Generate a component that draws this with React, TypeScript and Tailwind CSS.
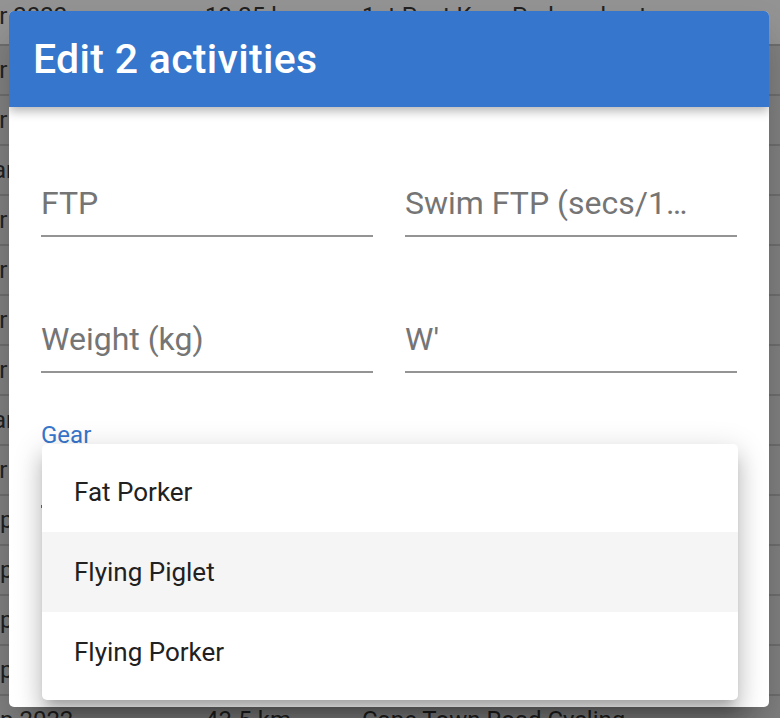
import React from "react";

interface Row {
  date: string;
  shift: string;
  distance?: string;
  name?: string;
}

// table rows that sit behind the backdrop, only their edges show
const rows: Row[] = [
  { date: "Apr 2022", shift: "-ml-[30px]", distance: "13.25 km", name: "1st Post Kom Park and out" },
  { date: "Apr 2022", shift: "-ml-[30px]" },
  { date: "Apr 2022", shift: "-ml-[30px]" },
  { date: "Mar 2022", shift: "-ml-[28px]" },
  { date: "Apr 2022", shift: "-ml-[30px]" },
  { date: "Apr 2022", shift: "-ml-[30px]" },
  { date: "Apr 2022", shift: "-ml-[30px]" },
  { date: "Apr 2022", shift: "-ml-[30px]" },
  { date: "Mar 2022", shift: "-ml-[28px]" },
  { date: "Apr 2022", shift: "-ml-[30px]" },
  { date: "Sep 2022", shift: "-ml-[27px]" },
  { date: "Sep 2022", shift: "-ml-[27px]" },
  { date: "Sep 2022", shift: "-ml-[27px]" },
  { date: "Sep 2022", shift: "-ml-[27px]" },
  { date: "Sep 2022", shift: "-ml-[27px]", distance: "43.5 km", name: "Cape Town Road Cycling" },
];

const gear = ["Fat Porker", "Flying Piglet", "Flying Porker"];

const Field: React.FC<{ label: string }> = ({ label }) => (
  <div className="flex flex-col">
    <span className="block max-w-[292px] truncate text-[32px] leading-[38px] text-[#757575]">
      {label}
    </span>
    <div className="mt-[13px] h-[2px] bg-[#949494]" />
  </div>
);

export default function App() {
  return (
    <div className="relative h-[718px] w-[780px] overflow-hidden bg-[#dddddd] font-['Roboto','Liberation_Sans',sans-serif]">
      {/* activity list */}
      <div className="flex flex-col text-[24px] text-[#3a3a3a]">
        {rows.map((row, i) => (
          <div
            key={i}
            className={
              i === 0
                ? "flex h-[46px] items-start border-b-2 border-[#bebebe] bg-white pt-[2px] leading-[28px]"
                : "flex h-[50px] items-center border-b-2 border-[#bebebe] leading-[28px]"
            }
          >
            <div className="w-[205px] shrink-0">
              <span className={`block whitespace-nowrap ${row.shift}`}>{row.date}</span>
            </div>
            <div className="w-[157px] shrink-0 whitespace-nowrap">{row.distance}</div>
            <div className="whitespace-nowrap">{row.name}</div>
          </div>
        ))}
      </div>

      {/* backdrop */}
      <div className="absolute inset-0 flex items-center bg-black/[0.42] pl-[9px]">
        <div className="flex h-[696px] w-[760px] flex-col overflow-hidden rounded-[5px] bg-white shadow-[0_22px_30px_-14px_rgba(0,0,0,0.2),0_20px_40px_4px_rgba(0,0,0,0.12)]">
          <div className="relative z-10 flex h-[96px] shrink-0 items-center bg-[#3676cc] px-[24px] shadow-[0_4px_10px_rgba(0,0,0,0.3)]">
            <h2 className="text-[41px] font-medium leading-[48px] tracking-[0.3px] text-white">
              Edit 2 activities
            </h2>
          </div>

          <div className="flex flex-col px-[32px] pt-[77px]">
            <div className="grid grid-cols-2 gap-x-[32px] gap-y-[83px]">
              <Field label="FTP" />
              <Field label="Swim FTP (secs/100m)" />
              <Field label="Weight (kg)" />
              <Field label="W'" />
            </div>

            <div className="mt-[48px] flex flex-col">
              <span className="text-[24px] leading-[28px] text-[#3676cc]">Gear</span>
              <div className="h-[56px]" />
              <div className="h-[3px] bg-[#3676cc]" />
            </div>
          </div>
        </div>
      </div>

      {/* gear menu */}
      <div className="absolute left-[42px] top-[444px] w-[696px] rounded-[5px] bg-white py-[8px] shadow-[0_10px_10px_-6px_rgba(0,0,0,0.2),0_16px_20px_2px_rgba(0,0,0,0.14),0_6px_28px_4px_rgba(0,0,0,0.12)]">
        {gear.map((g, i) => (
          <div
            key={g}
            className={`flex h-[80px] items-center pl-[32px] text-[26px] text-[#212121] ${
              i === 1 ? "bg-[#f5f5f5]" : ""
            }`}
          >
            {g}
          </div>
        ))}
      </div>
    </div>
  );
}
